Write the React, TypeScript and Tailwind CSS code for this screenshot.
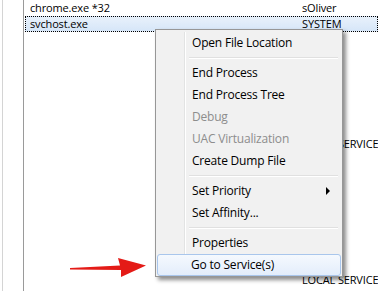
import React from "react";

const listFont = { fontFamily: '"Open Sans", "Noto Sans", sans-serif' };
const menuFont = { fontFamily: '"Open Sans", "Noto Sans", sans-serif' };

function Sep() {
  return (
    <div className="h-[8px] flex items-center pl-[31px] pr-[2px]">
      <div className="w-full">
        <div className="h-px bg-[#e0e0e0]" />
        <div className="h-px bg-white" />
      </div>
    </div>
  );
}

function Item({
  label,
  disabled,
  sub,
  hot,
}: {
  label: string;
  disabled?: boolean;
  sub?: boolean;
  hot?: boolean;
}) {
  return (
    <div
      className={
        "relative h-[22px] flex items-center pl-[34px] pr-[10px] text-[12px] tracking-[-0.2px] " +
        (disabled ? "text-[#8d8d8d] " : "text-black ") +
        (hot
          ? "rounded-[3px] border border-[#a9c6ec] bg-gradient-to-b from-[#f5f9fe] to-[#e3edfb] -ml-px -mr-px"
          : "")
      }
    >
      <span className={hot ? "-ml-px" : ""}>{label}</span>
      {sub && (
        <svg
          className="absolute right-[9px] top-[7px]"
          width="5"
          height="8"
          viewBox="0 0 5 8"
        >
          <path d="M0 0 L4 4 L0 8 Z" fill="#000" />
        </svg>
      )}
    </div>
  );
}

export default function App() {
  return (
    <div className="relative w-[378px] h-[291px] overflow-hidden bg-white" style={listFont}>
      {/* list area */}
      <div className="flex h-full">
        <div className="w-[2px] shrink-0" />
        <div className="w-px shrink-0 bg-[#d4d4d4]" />
        <div className="w-[20px] shrink-0" />
        <div className="w-px shrink-0 bg-[#9a9a9a]" />
        <div className="flex-1 min-w-0 flex flex-col text-[11px] tracking-[-0.15px] text-black whitespace-nowrap">
          <div className="h-[16px] shrink-0 flex items-center">
            <span className="ml-[6px] w-[272px] shrink-0">chrome.exe *32</span>
            <span>sOliver</span>
          </div>
          <div className="h-[16px] shrink-0 flex items-center ml-px border border-dotted border-black bg-gradient-to-b from-[#e8f1fb] to-[#d6e6f8]">
            <span className="ml-[4px] w-[272px] shrink-0">svchost.exe</span>
            <span>SYSTEM</span>
          </div>
          <div className="h-[104px] shrink-0" />
          <div className="h-[16px] shrink-0 flex items-center">
            <span className="ml-[278px]">LOCAL SERVICE</span>
          </div>
          <div className="h-[120px] shrink-0" />
          <div className="h-[16px] shrink-0 flex items-center">
            <span className="ml-[278px]">LOCAL SERVICE</span>
          </div>
        </div>
      </div>

      {/* red arrow */}
      <svg className="absolute left-[68px] top-[255px]" width="80" height="25" viewBox="0 0 80 25">
        <path
          d="M2 13 L52 10.5 L50 3 L78 10.5 L53 22 L53 15 L2 14.5 Z"
          fill="#e41b17"
        />
      </svg>

      {/* context menu */}
      <div
        className="absolute left-[155px] top-[29px] w-[188px] h-[248px] border border-[#979797] bg-[#f1f1f1] shadow-[3px_3px_4px_rgba(0,0,0,0.45)]"
        style={menuFont}
      >
        <div className="relative h-full p-[2px]">
          <div className="absolute left-[28px] top-[2px] bottom-[2px] w-px bg-[#e2e3e3]" />
          <div className="absolute left-[29px] top-[2px] bottom-[2px] w-px bg-white" />
          <div className="relative flex flex-col">
            <Item label="Open File Location" />
            <Sep />
            <Item label="End Process" />
            <Item label="End Process Tree" />
            <Item label="Debug" disabled />
            <Item label="UAC Virtualization" disabled />
            <Item label="Create Dump File" />
            <Sep />
            <Item label="Set Priority" sub />
            <Item label="Set Affinity..." />
            <Sep />
            <Item label="Properties" />
            <Item label="Go to Service(s)" hot />
          </div>
        </div>
      </div>
    </div>
  );
}
